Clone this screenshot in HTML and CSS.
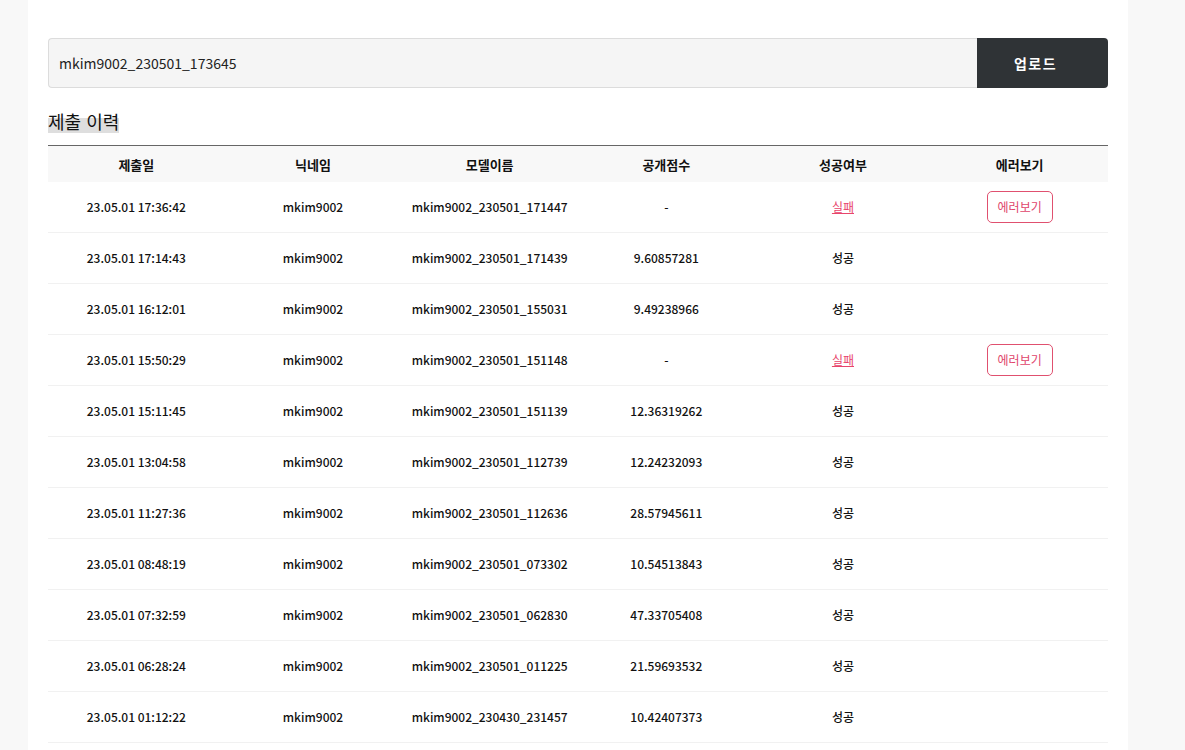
FILE: index.html
```html
<!DOCTYPE html>
<html lang="ko">
<head>
<meta charset="utf-8">
<title>제출 이력</title>
<link rel="stylesheet" href="styles.css">
</head>
<body>
<div class="page">
  <div class="upload">
    <div class="file-input" lang="en">mkim9002_230501_173645</div>
    <button class="upload-btn">업로드</button>
  </div>
  <h2 class="title"><span class="hl">제출 이력</span></h2>
  <table class="history">
    <thead>
      <tr><th>제출일</th><th>닉네임</th><th>모델이름</th><th>공개점수</th><th>성공여부</th><th>에러보기</th></tr>
    </thead>
    <tbody lang="en">
      <tr><td>23.05.01 17:36:42</td><td>mkim9002</td><td>mkim9002_230501_171447</td><td>-</td><td><a class="fail" lang="ko">실패</a></td><td><button class="err-btn" lang="ko">에러보기</button></td></tr>
      <tr><td>23.05.01 17:14:43</td><td>mkim9002</td><td>mkim9002_230501_171439</td><td>9.60857281</td><td lang="ko">성공</td><td></td></tr>
      <tr><td>23.05.01 16:12:01</td><td>mkim9002</td><td>mkim9002_230501_155031</td><td>9.49238966</td><td lang="ko">성공</td><td></td></tr>
      <tr><td>23.05.01 15:50:29</td><td>mkim9002</td><td>mkim9002_230501_151148</td><td>-</td><td><a class="fail" lang="ko">실패</a></td><td><button class="err-btn" lang="ko">에러보기</button></td></tr>
      <tr><td>23.05.01 15:11:45</td><td>mkim9002</td><td>mkim9002_230501_151139</td><td>12.36319262</td><td lang="ko">성공</td><td></td></tr>
      <tr><td>23.05.01 13:04:58</td><td>mkim9002</td><td>mkim9002_230501_112739</td><td>12.24232093</td><td lang="ko">성공</td><td></td></tr>
      <tr><td>23.05.01 11:27:36</td><td>mkim9002</td><td>mkim9002_230501_112636</td><td>28.57945611</td><td lang="ko">성공</td><td></td></tr>
      <tr><td>23.05.01 08:48:19</td><td>mkim9002</td><td>mkim9002_230501_073302</td><td>10.54513843</td><td lang="ko">성공</td><td></td></tr>
      <tr><td>23.05.01 07:32:59</td><td>mkim9002</td><td>mkim9002_230501_062830</td><td>47.33705408</td><td lang="ko">성공</td><td></td></tr>
      <tr><td>23.05.01 06:28:24</td><td>mkim9002</td><td>mkim9002_230501_011225</td><td>21.59693532</td><td lang="ko">성공</td><td></td></tr>
      <tr><td>23.05.01 01:12:22</td><td>mkim9002</td><td>mkim9002_230430_231457</td><td>10.42407373</td><td lang="ko">성공</td><td></td></tr>
    </tbody>
  </table>
</div>
</body>
</html>
```
FILE: styles.css
```css
html, body {
  margin: 0;
  padding: 0;
  background: #f8f8f8;
  font-family: "Noto Sans CJK KR", "Noto Sans", sans-serif;
  color: #111;
}
body {
  height: 750px;
  overflow: hidden;
}
.page {
  box-sizing: border-box;
  width: 1100px;
  height: 750px;
  overflow: hidden;
  margin-left: 28px;
  padding: 38px 20px 0;
  background: #fff;
}
.upload {
  display: flex;
  height: 50px;
}
.file-input {
  flex: 1;
  box-sizing: border-box;
  background: #f5f5f5;
  border: 1px solid #dcdcdc;
  border-right: none;
  border-radius: 4px 0 0 4px;
  padding-left: 10px;
  display: flex;
  align-items: center;
  font-size: 14px;
  color: #222;
}
.upload-btn {
  width: 131px;
  border: none;
  background: #2f3336;
  color: #fff;
  border-radius: 0 4px 4px 0;
  font-family: inherit;
  font-size: 14px;
  font-weight: 700;
  letter-spacing: 1.5px;
  padding: 0 14px 0 0;
}
.title {
  margin: 21px 0 11px;
  font-size: 18px;
  font-weight: 400;
  line-height: 25px;
  color: #111;
}
.hl {
  background: linear-gradient(transparent 40%, #dedede 40%, #dedede 96%, transparent 96%);
}
.history {
  width: 100%;
  border-collapse: collapse;
  table-layout: fixed;
  border-top: 1px solid #666;
}
.history th {
  height: 36px;
  padding: 0;
  background: #f8f8f8;
  font-size: 13px;
  font-weight: 700;
  color: #111;
}
.history td {
  height: 49px;
  padding: 0 0 1px;
  text-align: center;
  font-size: 12px;
  font-weight: 500;
  color: #111;
  border-bottom: 1px solid #f1f1f1;
}
.fail {
  color: #e8456c;
  text-decoration: underline;
  font-weight: 400;
  cursor: pointer;
}
.err-btn {
  width: 66px;
  height: 32px;
  border: 1px solid #e0506f;
  border-radius: 5px;
  background: #fff;
  color: #e0456b;
  font-family: inherit;
  font-size: 12px;
  padding: 0;
}
```
